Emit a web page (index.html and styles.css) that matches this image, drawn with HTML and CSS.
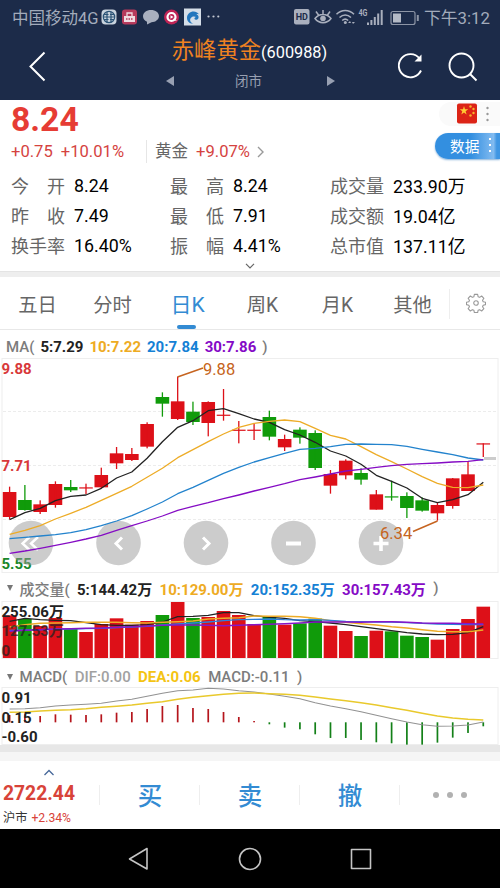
FILE: index.html
```
<!DOCTYPE html>
<html lang="zh-CN">
<head>
<meta charset="utf-8">
<title>赤峰黄金 600988</title>
<link rel="stylesheet" href="styles.css">
</head>
<body>
<header class="top">
  <div class="status">
    <span class="carrier">中国移动4G</span>
    <svg class="status-apps" viewBox="0 0 120 18" width="120" height="18">
      <rect x="0.5" y="1.5" width="15" height="15" rx="4" fill="#c9d3de"/>
      <g fill="none" stroke="#2c5477" stroke-width="1.2"><circle cx="8" cy="9" r="5.7"/><path d="M6 4v10M10 4v10M3 6.5h4.500M9 6.500h4M3 11.500h4.500M9 11.500h4M2.500 9h11"/></g>
      <rect x="21" y="1.500" width="15" height="15" rx="3" fill="#b63a5c"/>
      <path d="M23 8h11v6H23z" fill="#f0dce2"/><path d="M26 8V5h5v3" fill="none" stroke="#f0dce2" stroke-width="1.300"/><path d="M25 11h7" stroke="#b63a5c" stroke-width="1.500" stroke-dasharray="1.500 1"/>
      <path d="M50 2c4.500 0 8 2.600 8 6s-3.500 6.200-7.500 6.200L46 16.500v-2.800c-2.500-1-4-3-4-5.500C42 4.600 45.500 2 50 2z" fill="#a9b0bf"/>
      <circle cx="70.500" cy="9" r="7.500" fill="#c02456"/><circle cx="70.500" cy="9" r="4" fill="none" stroke="#fff" stroke-width="2.200"/><path d="M69.500 7.200l3 1.800-3 1.800zM72 12l4 1-3-3z" fill="#fff"/>
      <rect x="83" y="0.500" width="17" height="17" fill="#d5dee8"/>
      <path d="M96 4.500C91.500 2 86 5 86 10c0 3.500 3 6 6.500 5.500-3-.5-4-3-3-5 1-2.200 4-2.500 5.500-1.500-1 .2-1.800 1-1.500 2 .5 1.300 3 1 3.800-.5.800-1.800 0-3.500-1.800-4.300.8-.2 1.700-.1 2.500.3-.3-.8-1-1.500-2-2z" fill="#2376bd"/>
      <g fill="#c3c8d2"><circle cx="107.500" cy="8.500" r="1.100"/><circle cx="112.500" cy="8.500" r="1.100"/><circle cx="117.300" cy="8.500" r="1.100"/></g>
    </svg>
    <svg class="status-sys" viewBox="0 0 126 20" width="126" height="20">
      <rect x="0" y="2" width="15.500" height="15.500" rx="2" fill="#a9afbd"/>
      <text x="7.800" y="13.200" class="hd">HD</text>
      <g fill="none" stroke="#a9afbd" stroke-width="1.500">
        <path d="M21 11.500c4-5.500 12-5.500 16 0-4 5.500-12 5.500-16 0zM29 7V3M24.500 8l-2.500-3.500M33.500 8l2.500-3.500"/>
        <path d="M42.500 7.200c5-5 12.500-5 17.500 0M45.500 10.500c3.500-3.200 8-3.200 11.500 0M48.200 13.500c2-1.800 4-1.800 6 0"/>
      </g>
      <circle cx="29" cy="11.500" r="2.800" fill="#a9afbd"/><circle cx="51.300" cy="15.500" r="1.500" fill="#a9afbd"/>
      <path d="M56 14l-2 2h3zM59 17l2-2h-3z" fill="#a9afbd"/>
      <text x="64.500" y="9" class="net" textLength="9" lengthAdjust="spacingAndGlyphs">4G</text>
      <path d="M74 18v-2.500M77.400 18v-5M80.800 18V10M84.200 18V6.500M87.700 18V3" stroke="#a9afbd" stroke-width="2"/>
      <rect x="97" y="4.500" width="24" height="13" rx="2" fill="none" stroke="#8d95a6" stroke-width="1.200"/>
      <rect x="99" y="6.500" width="8" height="9" fill="#b4bac6"/><path d="M123.800 8v6" stroke="#8d95a6" stroke-width="2"/>
    </svg>
    <span class="time">下午3:12</span>
  </div>
  <div class="titlebar">
    <svg class="back" viewBox="0 0 20 32" width="20" height="32"><path d="M16.500 2.500L2.500 16.500l14 14" fill="none" stroke="#fff" stroke-width="2"/></svg>
    <div class="title">
      <div class="name"><span>赤峰黄金</span><b>(600988)</b></div>
      <div class="market"><i class="tri left"></i><span>闭市</span><i class="tri right"></i></div>
    </div>
    <svg class="actions" viewBox="0 0 84 32" width="84" height="32" fill="none" stroke="#fff" stroke-width="1.900">
      <path d="M23.500 8.500A11.600 11.600 0 1 0 25 20.500"/><path d="M25.500 4.500v7h-7z" fill="#fff" stroke="none"/>
      <circle cx="65.500" cy="15.500" r="12"/><path d="M74 24l6.500 6.500"/>
    </svg>
  </div>
</header>

<section class="quote">
  <div class="side">
    <div class="flag-pill">
      <svg viewBox="0 0 50 24" width="50" height="24">
        <rect x="7" y="1.500" width="20" height="20" rx="2" fill="#dc2417"/>
        <path d="M14 4l1 3.200h3.300l-2.700 2 1 3.200-2.600-2-2.700 2 1-3.200-2.600-2H13z" fill="#fc3"/>
        <g fill="#f7b42c"><circle cx="20.500" cy="4.500" r="1.200"/><circle cx="23.500" cy="7" r="1.200"/><circle cx="23.500" cy="11" r="1.200"/><circle cx="20.500" cy="13.500" r="1.200"/></g>
        <g fill="#999"><circle cx="37.500" cy="6" r="1.200"/><circle cx="37.500" cy="12" r="1.200"/><circle cx="37.500" cy="18" r="1.200"/></g>
      </svg>
    </div>
    <div class="data-pill"><span>数据</span><i></i></div>
  </div>
  <div class="price">8.24</div>
  <div class="change">
    <span>+0.75</span><span>+10.01%</span>
    <span class="sector">黄金</span><span>+9.07%</span>
    <svg viewBox="0 0 8 12" width="8" height="12"><path d="M1 1l5 5-5 5" fill="none" stroke="#999" stroke-width="1.400"/></svg>
  </div>
  <div class="stats">
    <div><span>今</span><span>开</span></div><b>8.24</b><div><span>最</span><span>高</span></div><b>8.24</b><div>成交量</div><b>233.90万</b>
    <div><span>昨</span><span>收</span></div><b>7.49</b><div><span>最</span><span>低</span></div><b>7.91</b><div>成交额</div><b>19.04亿</b>
    <div>换手率</div><b>16.40%</b><div><span>振</span><span>幅</span></div><b>4.41%</b><div>总市值</div><b>137.11亿</b>
  </div>
  <svg class="expand" viewBox="0 0 10 6" width="10" height="6"><path d="M1 .8l4 4 4-4" fill="none" stroke="#666" stroke-width="1.200"/></svg>
</section>

<nav class="tabs">
  <span>五日</span><span>分时</span><span class="on">日K</span><span>周K</span><span>月K</span><span>其他</span>
  <div class="gear"><svg viewBox="0 0 22 22" width="20" height="20" fill="none" stroke="#999" stroke-width="1.200" stroke-linejoin="round"><path d="M9.200 1.500h3.600l.5 2.600 1.700.7 2.200-1.500 2.500 2.500-1.500 2.200.7 1.700 2.600.5v2.600l-2.600.6-.7 1.700 1.500 2.200-2.500 2.500-2.200-1.500-1.700.7-.5 2.500H9.200l-.5-2.500-1.700-.7-2.200 1.500-2.500-2.500 1.500-2.200-.7-1.700-2.600-.6v-2.600l2.600-.5.7-1.700-1.500-2.200 2.500-2.500L7 4.800l1.700-.7z"/><circle cx="11" cy="11" r="2.500"/></svg></div>
</nav>

<div class="legend ma"><span>MA(</span><b class="k">5:7.29</b><b class="y">10:7.22</b><b class="b">20:7.84</b><b class="p">30:7.86</b><span>)</span></div>
<svg class="chart" id="kline" viewBox="0 358 500 216" width="500" height="216"></svg>

<div class="legend vol"><i class="drop"></i><span>成交量(</span><b class="k">5:144.42万</b><b class="y">10:129.00万</b><b class="b">20:152.35万</b><b class="p">30:157.43万</b><span>)</span></div>
<svg class="chart" id="volume" viewBox="0 601 500 60" width="500" height="60"></svg>

<div class="legend macd"><i class="drop"></i><span>MACD(</span><b class="g">DIF:0.00</b><b class="d">DEA:0.06</b><span>MACD:-0.11</span><span>)</span></div>
<svg class="chart" id="macd" viewBox="0 687 500 58" width="500" height="58"></svg>

<div class="divider"></div>
<footer class="trade">
  <div class="index">
    <svg viewBox="0 0 12 7" width="12" height="7"><path d="M1.500 6L6 1.500 10.500 6" fill="none" stroke="#47689a" stroke-width="1.300"/></svg>
    <strong>2722.44</strong>
    <p>沪市 <em>+2.34%</em></p>
  </div>
  <div class="act">买</div><div class="act">卖</div><div class="act">撤</div>
  <div class="act more"><i></i><i></i><i></i></div>
</footer>
<div class="sysnav">
  <svg viewBox="0 0 24 24" width="24" height="24"><path d="M20 1.500v20.500L2.500 12z"/></svg>
  <svg viewBox="0 0 24 24" width="24" height="24"><circle cx="12" cy="12" r="10.500"/></svg>
  <svg viewBox="0 0 24 24" width="24" height="24"><rect x="2.500" y="2.500" width="19" height="19"/></svg>
</div>
<script src="charts.js"></script>
</body>
</html>
```
FILE: styles.css
```
* { box-sizing: border-box; }
body {
  margin: 0;
  width: 500px;
  height: 888px;
  overflow: hidden;
  background: #fff;
  font-family: Roboto, "Noto Sans CJK SC", sans-serif;
  color: #000;
}
svg { display: block; flex: none; }
i, em { font-style: normal; }

.top { height: 100px; background: #1c2b49; }
.status { display: flex; align-items: center; height: 34px; padding: 0 0 0 12px; color: #a3abbb; }
.carrier { width: 89px; font-size: 16.5px; white-space: nowrap; }
.status-sys { margin-left: 73px; }
.time { margin-left: 4px; font-size: 16.8px; white-space: nowrap; }
.hd { font: 700 9px Roboto, sans-serif; text-anchor: middle; fill: #1c2b49; }
.net { font: 700 9px Roboto, sans-serif; fill: #a9afbd; }
.titlebar { display: flex; height: 66px; padding-left: 28px; }
.back { margin-top: 16px; }
.title { width: 348px; }
.name { display: flex; justify-content: center; align-items: baseline; height: 37px; line-height: 33px; margin-left: 55px; width: 293px; white-space: nowrap; }
.name span { font-size: 22.3px; color: #ee8221; }
.name b { font-size: 16.3px; font-weight: 400; color: #fff; }
.market { display: flex; align-items: center; margin-left: 118px; width: 169px; justify-content: space-between; font-size: 13.5px; line-height: 20px; color: #98a0b2; }
.market span { margin-left: -4px; }
.tri { border: 5px solid transparent; width: 0; height: 0; }
.tri.left { border-right: 8px solid #98a0b2; border-left: 0; }
.tri.right { border-left: 8px solid #98a0b2; border-right: 0; }
.actions { margin-top: 16px; }

.quote { position: relative; height: 172px; padding-left: 11px; border-bottom: 1px solid #e4e4e4; }
.price { height: 38px; font-size: 33.7px; line-height: 39px; font-weight: 700; color: #e63c34; }
.change { display: flex; align-items: center; height: 27px; font-size: 16.6px; color: #d5433f; white-space: nowrap; }
.change span + span { margin-left: 8px; }
.change .sector { margin-left: 22px !important; padding-left: 8px; border-left: 1px solid #e6e6e6; color: #666; font-size: 16.5px; line-height: 23px; }
.change svg { margin-left: 7px; }
.stats { display: grid; grid-template-columns: 63px 96px 63px 97px 63px 1fr; grid-auto-rows: 30px; align-items: center; margin-top: 5px; font-size: 18px; color: #666; white-space: nowrap; }
.stats div { display: flex; justify-content: space-between; width: 54px; }
.stats b { font-weight: 400; color: #000; font-size: 17.8px; }
.expand { position: absolute; left: 245px; top: 163px; }
.side { position: absolute; right: 0; top: 0; width: 65px; }
.flag-pill { margin: 2px 0 0 4px; padding-left: 11px; height: 24px; border-radius: 12px 0 0 12px; background: #fafafa; overflow: hidden; }
.data-pill { display: flex; align-items: center; margin-top: 7px; height: 26px; padding: 0 0 2px 15px; border-radius: 13px 0 0 13px; background: linear-gradient(90deg, #338fe0 0 55%, #67aceb 78%, #82bbf0 90%, #3f96e3 95%); box-shadow: 0 1px 2px #8bb4da; color: #fff; font-size: 14.7px; }
.data-pill i { width: 2px; height: 14px; margin-left: 10px; background: repeating-linear-gradient(#fff 0 2px, transparent 2px 6px); }

.tabs { display: flex; height: 58px; border-top: 5px solid #eee; border-bottom: 1px solid #e8e8e8; }
.tabs > span { position: relative; width: 75px; text-align: center; font-size: 19.3px; line-height: 57px; color: #666; }
.tabs .on { color: #338bd3; font-size: 21px; }
.tabs .on::after { content: ""; position: absolute; left: 27px; bottom: 0; width: 19px; height: 4px; border-radius: 2px; background: #338bd3; }
.gear { margin: 12px 0 0 -1px; padding: 4px 0 0 16px; height: 30px; border-left: 1px solid #eee; }

.legend { display: flex; align-items: center; gap: 7px; font-size: 15px; white-space: nowrap; color: #7c7c7c; }
.legend > span { font-weight: 500; }
.ma { height: 28px; padding: 5px 0 0 6px; gap: 6px; }
.vol { height: 27px; padding: 1px 0 0 7px; gap: 7.4px; }
.macd { height: 26px; padding: 5px 0 0 7px; gap: 7.4px; }
.drop { border: 3.5px solid transparent; border-top: 6px solid #777; border-bottom: 0; margin-right: -1px; }
.k { color: #222; }
.y { color: #eeab23; }
.b { color: #1581d5; }
.p { color: #850ac6; }
.g { color: #a1a1a1; font-weight: 500; }
.d { color: #f4c414; }
.axis { font: 700 15px Roboto, "Noto Sans CJK SC", sans-serif; }
.callout { font: 400 16.5px Roboto, sans-serif; fill: #c66420; }

.divider { height: 16px; border-top: 7px solid #e7e7e7; background: #f5f5f5; }
.trade { display: flex; height: 68px; }
.index { width: 100px; padding: 8px 0 0 2px; }
.index svg { margin-left: 41px; }
.index strong { display: block; margin: 6px 0 0 1px; font-size: 19.3px; line-height: 24px; color: #d84339; }
.index p { margin: 2px 0 0 1px; font-size: 12.2px; line-height: 20px; color: #333; white-space: nowrap; }
.index em { color: #d84339; margin-left: 1px; }
.act { position: relative; width: 100px; text-align: center; font-size: 24.5px; line-height: 71px; font-weight: 500; color: #338bd3; }
.act::before { content: ""; position: absolute; left: -1px; top: 24px; height: 20px; border-left: 1px solid #eee; }
.more { display: flex; justify-content: center; align-items: center; gap: 8px; }
.more i { width: 6px; height: 6px; border-radius: 50%; background: #b1b1b1; }
.sysnav { display: flex; justify-content: center; gap: 87px; height: 59px; padding-top: 18px; background: #000; }
.sysnav path, .sysnav circle, .sysnav rect { fill: none; stroke: #c4c4c4; stroke-width: 1.600; stroke-linejoin: round; }
```
FILE: charts.js
```
const RED = '#dd1018', GREEN = '#109b0a';
const cx = i => 9.6 + 15.28 * i;
const rect = (x, y, w, h, fill) => `<rect x="${x}" y="${y}" width="${w}" height="${h}" fill="${fill}"/>`;
const frame = (y, h) => `<rect x="2" y="${y}" width="496" height="${h}" fill="none" stroke="#eee"/>`;
const text = (x, y, s, fill, cls = 'axis') => `<text x="${x}" y="${y}" class="${cls}" fill="${fill}">${s}</text>`;
// Series values are in thirds of a pixel below the chart's base line.
const line = (base, vals, color, w = 1.3) =>
  `<polyline fill="none" stroke="${color}" stroke-width="${w}" stroke-linejoin="round" points="${vals.map((v, i) => cx(i).toFixed(1) + ',' + (base + v / 3).toFixed(1)).join(' ')}"/>`;

const ups = 'RGRRGRRRRRGRGRRRRGRGGRRGRGGGRRRR';
// high, body top, body bottom, low
const candles = [[395,411,486,493],[390,435,465,467],[436,448,471,477],[379,387,450,458],[375,396,406,411],[386,397,399,417],[338,360,397,400],[276,295,325,342],[279,297,315,318],[202,207,275,280],[112,126,146,185],[65,139,192,195],[140,170,201,210],[139,141,204,244],[102,179,182,197],[198,224,227,265],[204,224,227,255],[167,186,245,256],[239,252,277,288],[217,224,248,266],[226,234,339,345],[345,357,392,416],[313,317,361,373],[340,354,374,389],[405,418,464,464],[377,424,427,437],[412,423,459,489],[427,436,467,470],[443,450,475,497],[369,370,453,461],[318,358,408,408],[265,265,268,306]];
let k = frame(358.5, 214);
for (const y of [411.5, 465.5, 519.5]) k += `<path d="M3 ${y}H496" stroke="#ececec" stroke-dasharray="3 2"/>`;
k += text(1.5, 373.5, '9.88', '#d8383a') + text(1.5, 471, '7.71', '#d8383a') + text(1.5, 568.5, '5.55', '#18862a');
candles.forEach(([h, t, b, l], i) => {
  const c = ups[i] === 'R' ? RED : GREEN;
  k += rect(cx(i) - 6.8, 355 + t / 3, 13.6, Math.max(1.2, (b - t) / 3), c) + rect(cx(i) - .65, 355 + h / 3, 1.3, (l - h) / 3, c);
});
const buttons = [
  [31, '<path d="M29.500 537l-7 6.500 7 6.500M38 537l-7 6.500 7 6.500" stroke-width="2.400"/>'],
  [118.5, '<path d="M122 537.500l-6 6 6 6"/>'],
  [206, '<path d="M203 537.500l6 6-6 6"/>'],
  [293.5, '<path d="M286 543.500h15" stroke-width="4"/>'],
  [381, '<path d="M373.500 543.500h15M381 536v15" stroke-width="3.600"/>']
];
for (const [x, glyph] of buttons) k += `<circle cx="${x}" cy="543" r="22.300" fill="#999" fill-opacity=".5"/><g fill="none" stroke="#fff" stroke-width="3">${glyph}</g>`;
k += line(355, [494,473,460,437,424,420,400,369,351,310,260,217,197,167,161,176,192,202,224,240,262,288,303,328,361,379,399,430,443,434,419,382], '#222');
k += line(355, [538,526,512,492,475,457,436,415,394,367,340,308,284,260,237,217,205,199,195,200,220,241,252,275,299,320,342,365,385,397,398,390], '#edac27');
k += line(355, [551,547,543,539,533,524,512,498,482,462,441,416,397,376,355,337,321,308,295,283,280,275,268,267,268,269,274,283,291,299,309,315], '#2383cd');
k += line(355, [595,588,580,571,562,552,541,526,512,498,483,466,454,443,431,420,408,397,386,374,366,357,348,343,337,332,328,326,324,321,319,314], '#850cc4');
k += rect(484, 457, 12, 3, '#ccc');
k += '<path d="M177.500 377L203 368M437.500 521L413 531.500" fill="none" stroke="#c66420" stroke-width="1.500"/>';
k += text(203, 374.5, '9.88', '', 'callout') + text(380, 538.5, '6.34', '', 'callout');
document.getElementById('kline').innerHTML = k;

const vols = [130,141,162,138,171,180,156,139,158,147,129,90,138,135,117,129,156,135,158,154,140,161,177,192,176,178,191,195,203,171,141,104];
let v = frame(601.5, 57);
vols.forEach((t, i) => { v += rect(cx(i) - 6.8, 572 + t / 3, 13.6, (258 - t) / 3, ups[i] === 'R' ? RED : GREEN); });
v += line(572, [148,139,143,145,146,152,158,160,160,158,150,134,133,130,122,122,131,136,139,146,149,153,158,164,170,176,182,186,188,187,182,164], '#222');
v += line(572, [165,158,154,153,152,151,151,151,152,153,151,149,147,141,139,137,132,133,133,134,139,146,151,155,159,164,168,173,178,179,179,174], '#edac27', 1.4);
v += line(572, [175,174,173,172,171,170,169,167,165,163,159,156,153,150,146,143,142,141,143,144,143,145,148,149,150,150,152,154,156,157,158,158], '#2b80dc');
v += line(572, [178,175,173,171,170,169,168,166,164,162,160,159,159,160,161,160,158,157,155,153,150,150,150,151,149,149,151,153,154,154,155,156], '#8516c8', 1.4);
v += text(1.5, 616.5, '255.06万', '#222') + `<g opacity=".75">${text(1.5, 636, '127.53万', '#222')}${text(1.5, 655.5, '0', '#222')}</g>`;
document.getElementById('volume').innerHTML = v;

const hist = [165,163,168,163,164,165,163,158,156,147,138,135,144,147,156,171,183,193,203,208,223,234,234,240,247,250,254,254,248,233,219,199];
let m = frame(687.5, 57);
hist.forEach((t, i) => { m += rect(cx(i) - .85, t < 187 ? 660 + t / 3 : 722.3, 1.7, Math.abs(187 - t) / 3, t < 187 ? '#b5151c' : '#138018'); });
m += line(660, [147,146,143,138,135,133,130,123,118,109,100,92,90,85,87,92,96,102,109,116,128,138,146,155,166,176,186,194,199,198,195,186], '#929292', 1.1);
m += line(660, [157,156,153,151,149,146,142,139,135,130,125,118,112,107,103,100,99,101,103,106,111,117,122,128,135,143,151,160,168,174,178,180], '#e9c92c', 1.4);
m += text(1.5, 703, '0.91', '#222') + text(1.5, 722.5, '0.15', '#222') + text(1.5, 742, '-0.60', '#222');
document.getElementById('macd').innerHTML = m;
```
